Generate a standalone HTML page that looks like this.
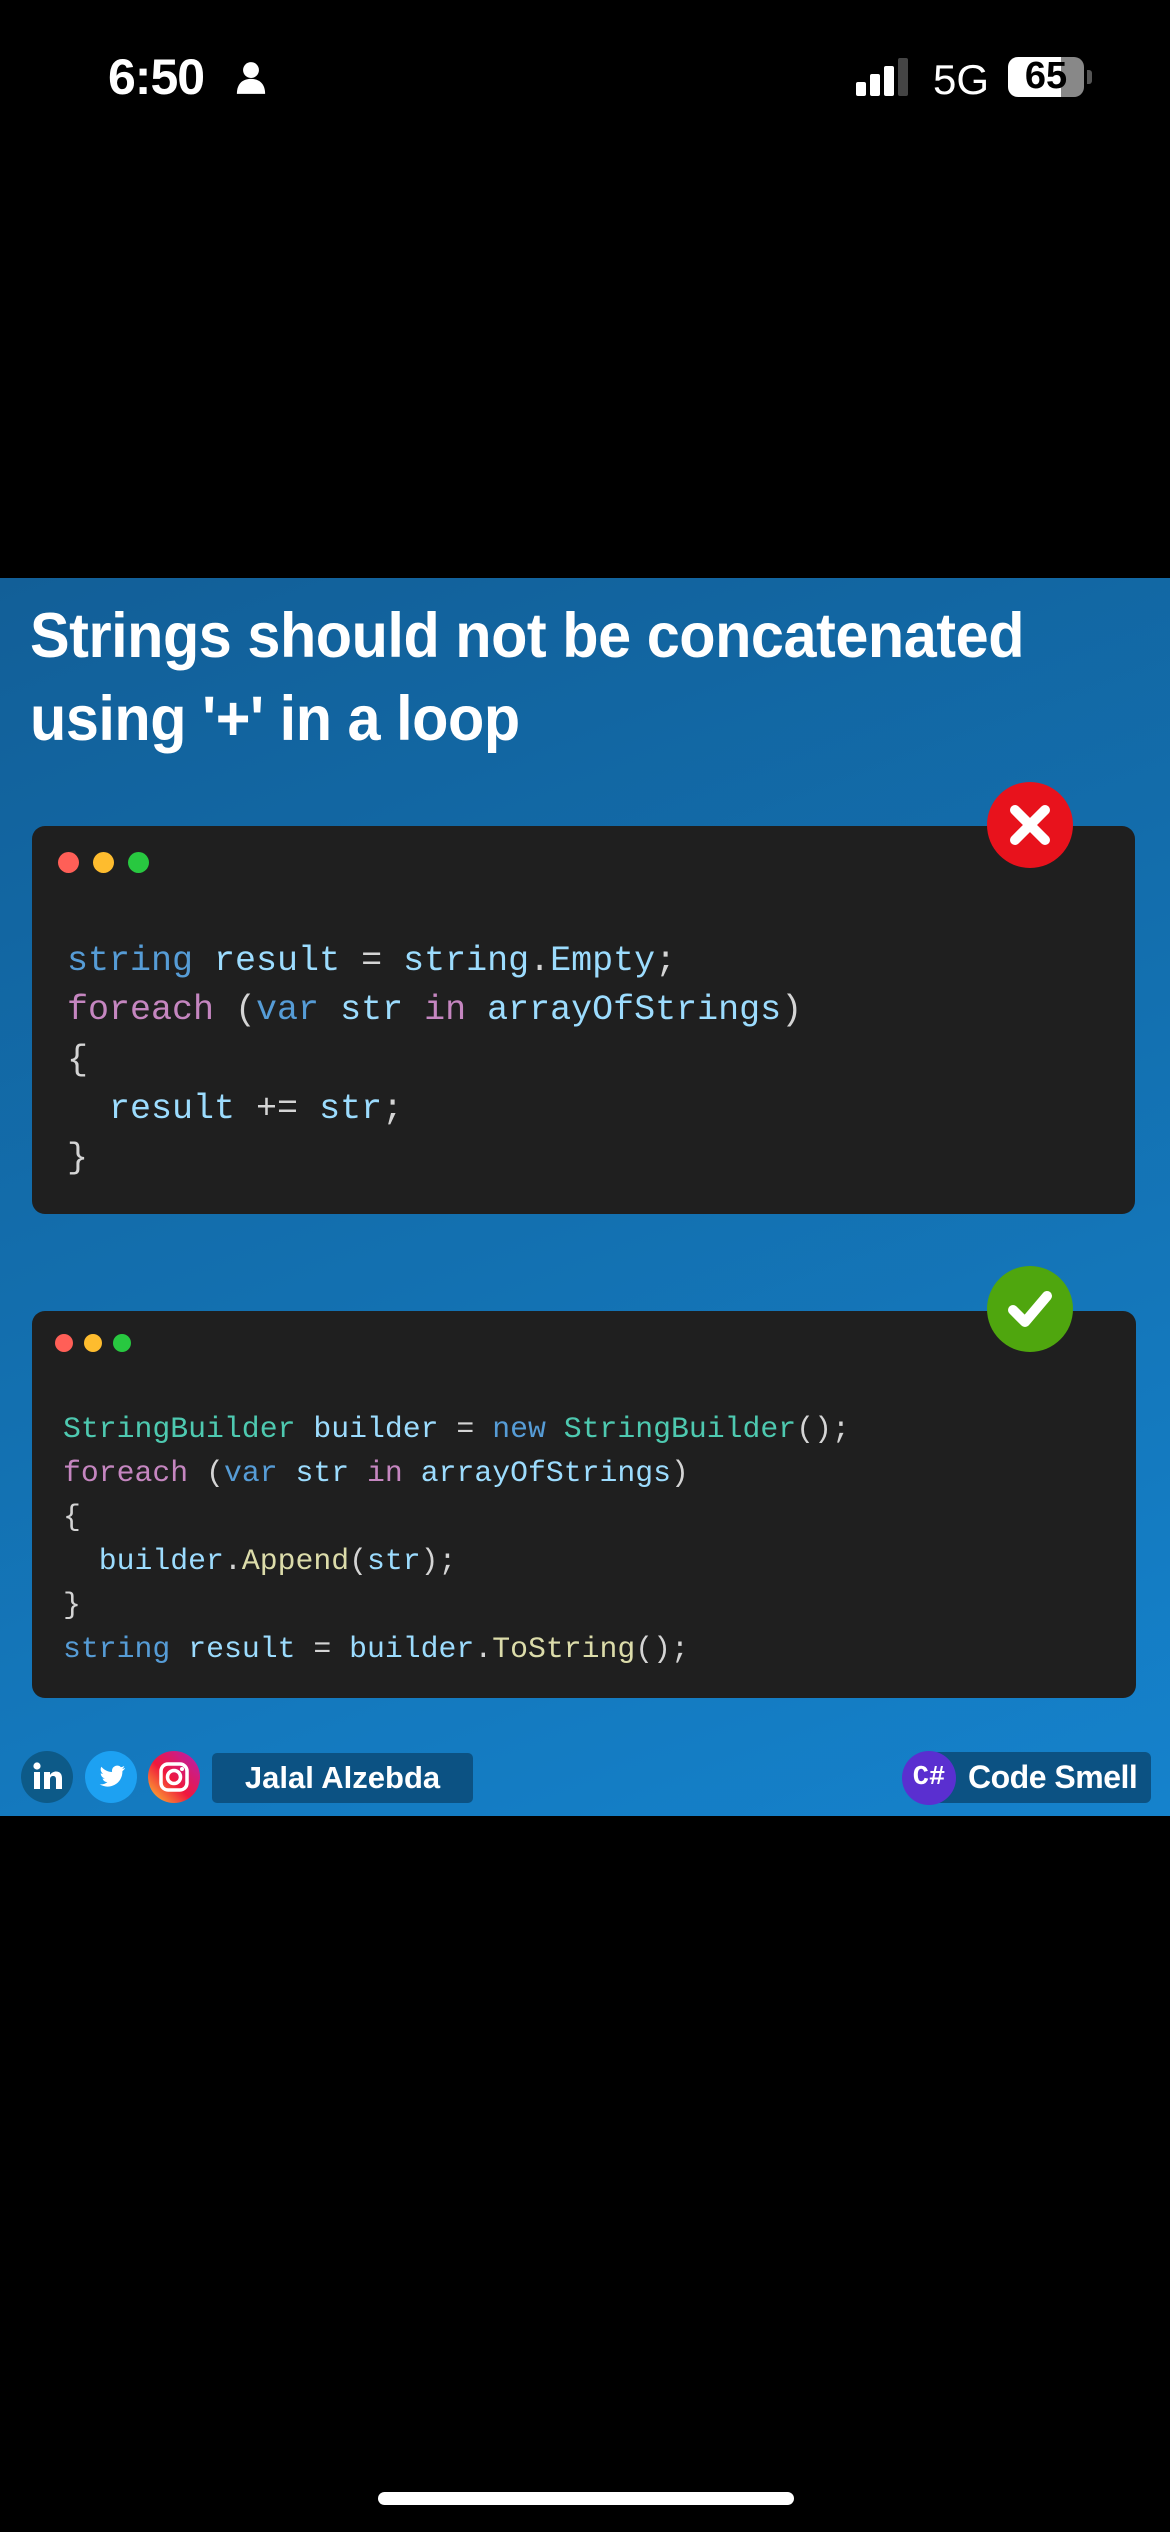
<!DOCTYPE html>
<html><head><meta charset="utf-8"><style>
*{margin:0;padding:0;box-sizing:border-box}
body{width:1170px;height:2532px;background:#000;position:relative;overflow:hidden;font-family:"Liberation Sans",sans-serif}
.abs{position:absolute}
.banner{left:0;top:578px;width:1170px;height:1238px;background:linear-gradient(160deg,#125f98 0%,#1370b0 50%,#1582cc 100%)}
.title{left:30px;color:#fff;font-weight:bold;font-size:63px;white-space:nowrap;transform:scaleX(0.943);transform-origin:left top;letter-spacing:-0.5px}
.card{background:#1f1f1f;border-radius:13px}
.dot{border-radius:50%}
.code{font-family:"Liberation Mono",monospace;white-space:pre;color:#d4d4d4}
.k{color:#569cd6}.p{color:#c586c0}.v{color:#9cdcfe}.t{color:#4ec9b0}.m{color:#dcdcaa}
</style></head><body>
<div class="abs" style="left:108px;top:48px;color:#fff;font-size:50px;font-weight:bold;letter-spacing:-1px">6:50</div>
<svg class="abs" style="left:236px;top:61px" width="30" height="34" viewBox="0 0 34 38"><circle cx="17" cy="10" r="9" fill="#fff"/><path d="M1 37 C1 25 8 20 17 20 C26 20 33 25 33 37 Z" fill="#fff"/></svg>
<div class="abs" style="left:856px;top:82px;width:10px;height:14px;background:#fff;border-radius:2px"></div>
<div class="abs" style="left:870px;top:74px;width:10px;height:22px;background:#fff;border-radius:2px"></div>
<div class="abs" style="left:884px;top:66px;width:10px;height:30px;background:#fff;border-radius:2px"></div>
<div class="abs" style="left:898px;top:58px;width:10px;height:38px;background:#444;border-radius:2px"></div>
<div class="abs" style="left:933px;top:56px;color:#fff;font-size:42px">5G</div>
<div class="abs" style="left:1008px;top:57px;width:76px;height:40px;border-radius:10px;background:linear-gradient(90deg,#fff 0 70%,#888 70%)"></div>
<div class="abs" style="left:1011px;top:55px;width:70px;text-align:center;color:#000;font-weight:bold;font-size:38px">65</div>
<div class="abs" style="left:1087px;top:70px;width:5px;height:14px;background:#555;border-radius:0 3px 3px 0"></div>

<div class="abs banner"></div>
<div class="abs title" style="top:600px">Strings should not be concatenated</div>
<div class="abs title" style="top:683px">using '+' in a loop</div>

<div class="abs card" style="left:32px;top:826px;width:1103px;height:388px"></div>
<div class="abs dot" style="left:58px;top:852px;width:21px;height:21px;background:#ff5f57"></div>
<div class="abs dot" style="left:93px;top:852px;width:21px;height:21px;background:#febc2e"></div>
<div class="abs dot" style="left:128px;top:852px;width:21px;height:21px;background:#28c840"></div>
<div class="abs code" style="left:67px;top:937px;font-size:35px;line-height:49.3px"><span class="k">string</span> <span class="v">result</span> = <span class="v">string</span>.<span class="v">Empty</span>;
<span class="p">foreach</span> (<span class="k">var</span> <span class="v">str</span> <span class="p">in</span> <span class="v">arrayOfStrings</span>)
{
  <span class="v">result</span> += <span class="v">str</span>;
}</div>
<svg class="abs" style="left:986px;top:781px" width="88" height="88" viewBox="0 0 88 88"><circle cx="44" cy="44" r="43" fill="#e8121c"/><path d="M29 29 L59 59 M59 29 L29 59" stroke="#fff" stroke-width="10" stroke-linecap="round"/></svg>

<div class="abs card" style="left:32px;top:1311px;width:1104px;height:387px"></div>
<div class="abs dot" style="left:55px;top:1334px;width:18px;height:18px;background:#ff5f57"></div>
<div class="abs dot" style="left:84px;top:1334px;width:18px;height:18px;background:#febc2e"></div>
<div class="abs dot" style="left:113px;top:1334px;width:18px;height:18px;background:#28c840"></div>
<div class="abs code" style="left:63px;top:1407px;font-size:29.8px;line-height:44px"><span class="t">StringBuilder</span> <span class="v">builder</span> = <span class="k">new</span> <span class="t">StringBuilder</span>();
<span class="p">foreach</span> (<span class="k">var</span> <span class="v">str</span> <span class="p">in</span> <span class="v">arrayOfStrings</span>)
{
  <span class="v">builder</span>.<span class="m">Append</span>(<span class="v">str</span>);
}
<span class="k">string</span> <span class="v">result</span> = <span class="v">builder</span>.<span class="m">ToString</span>();</div>
<svg class="abs" style="left:986px;top:1265px" width="88" height="88" viewBox="0 0 88 88"><circle cx="44" cy="44" r="43" fill="#4fa60e"/><path d="M27 45 L39 57 L61 31" stroke="#fff" stroke-width="10" fill="none" stroke-linecap="round" stroke-linejoin="round"/></svg>

<svg class="abs" style="left:21px;top:1751px" width="52" height="52" viewBox="0 0 52 52"><circle cx="26" cy="26" r="26" fill="#0d5a88"/><rect x="13" y="21" width="6" height="17" fill="#fff"/><circle cx="16" cy="15" r="3.6" fill="#fff"/><path d="M23 21h6v3c1.5-2.5 4-3.5 6-3.5 4 0 6 2.5 6 7V38h-6V28.5c0-2.5-1-3.5-3-3.5s-3 1.5-3 3.5V38h-6z" fill="#fff"/></svg>
<svg class="abs" style="left:85px;top:1751px" width="52" height="52" viewBox="0 0 52 52"><circle cx="26" cy="26" r="26" fill="#1da1f2"/><path d="M40 17c-1 .5-2 .8-3 .9 1.1-.7 1.9-1.7 2.300-2.900-1 .6-2.100 1-3.300 1.300a5.200 5.200 0 0 0-8.900 4.700C22.800 21 19 19 16.400 15.800c-1.400 2.400-.7 5.400 1.600 7-.8 0-1.600-.3-2.300-.6 0 2.500 1.800 4.700 4.200 5.200-.8.200-1.600.3-2.400.1.700 2.100 2.600 3.600 4.900 3.600A10.500 10.500 0 0 1 14.700 33.300 14.800 14.800 0 0 0 37.400 20.800V20.100c1-.7 1.900-1.700 2.600-2.700z" fill="#fff"/></svg>
<svg class="abs" style="left:148px;top:1751px" width="52" height="52" viewBox="0 0 52 52"><defs><linearGradient id="ig" x1="0" y1="1" x2="1" y2="0"><stop offset="0" stop-color="#fdc830"/><stop offset=".45" stop-color="#f0183c"/><stop offset="1" stop-color="#b31fb8"/></linearGradient></defs><circle cx="26" cy="26" r="26" fill="url(#ig)"/><rect x="13" y="13" width="26" height="26" rx="7" fill="none" stroke="#fff" stroke-width="3.5"/><circle cx="26" cy="26" r="6.5" fill="none" stroke="#fff" stroke-width="3.5"/><circle cx="34" cy="18" r="2" fill="#fff"/></svg>
<div class="abs" style="left:212px;top:1753px;width:261px;height:50px;background:#0c5283;border-radius:5px;color:#fff;font-weight:bold;font-size:31px;line-height:50px;text-align:center">Jalal Alzebda</div>
<div class="abs" style="left:930px;top:1752px;width:221px;height:51px;background:#0c5283;border-radius:6px;color:#fff;font-weight:bold;font-size:32px;line-height:51px;padding-left:38px;letter-spacing:-0.5px">Code Smell</div>
<div class="abs" style="left:902px;top:1751px;width:54px;height:54px;border-radius:50%;background:#5a2fd0;color:#fff;font-weight:bold;font-size:27px;line-height:54px;text-align:center;font-family:'Liberation Mono',monospace">C#</div>

<div class="abs" style="left:378px;top:2492px;width:416px;height:13px;background:#fff;border-radius:7px"></div>
</body></html>
